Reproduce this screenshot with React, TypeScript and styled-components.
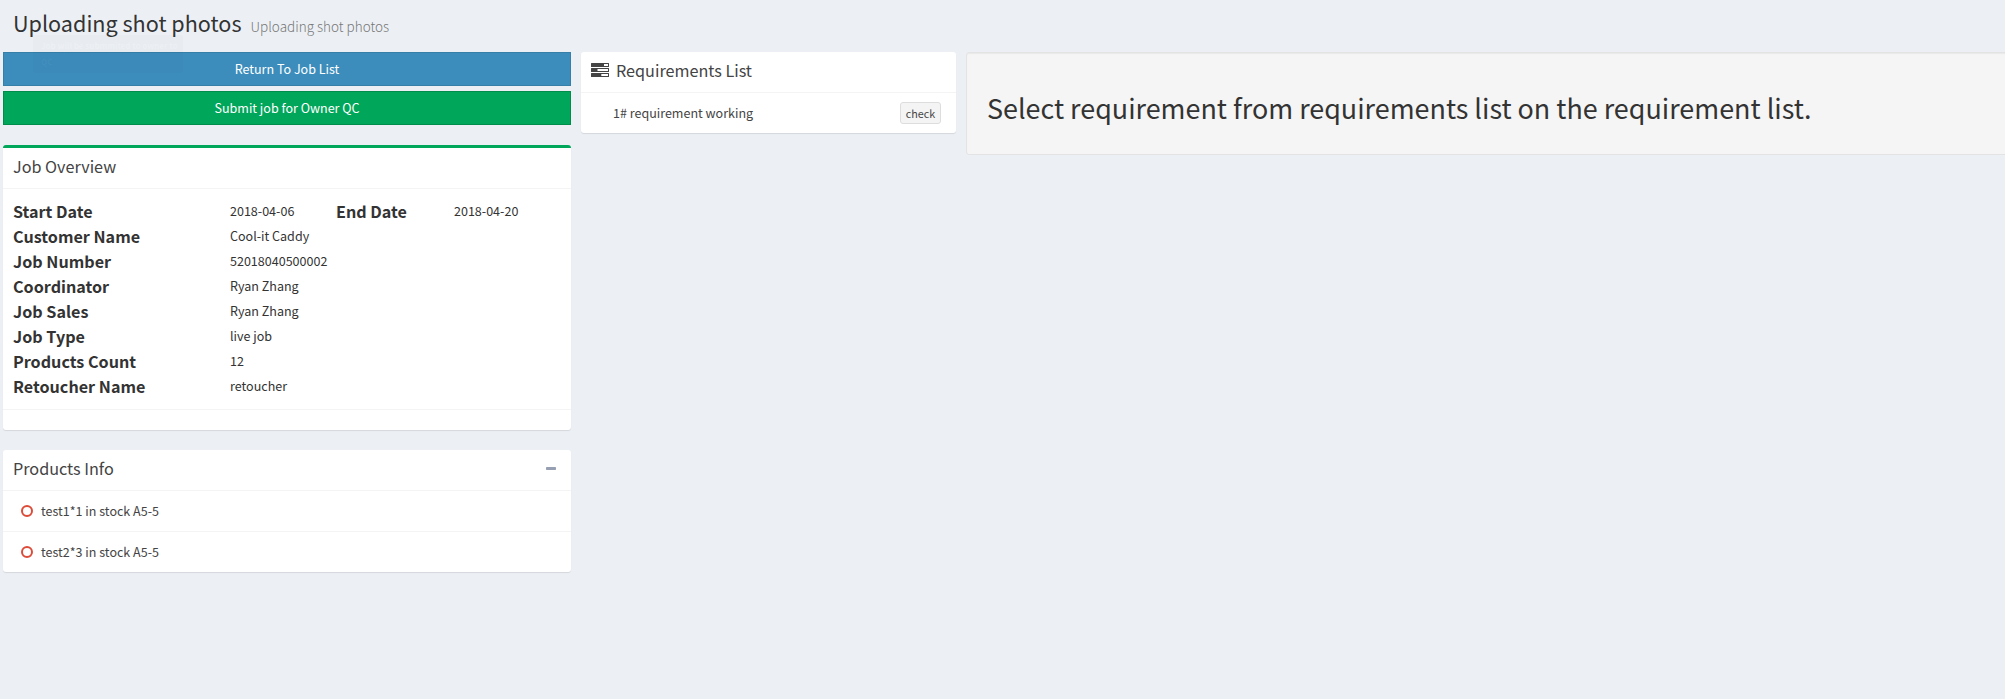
import React from 'react';
import styled, { createGlobalStyle } from 'styled-components';

const GlobalStyle = createGlobalStyle`
  *, *::before, *::after { box-sizing: border-box; }
  html, body { margin: 0; padding: 0; }
  body {
    min-height: 100vh;
    overflow: hidden;
    background: #ecf0f5;
    color: #333;
    font-family: "Noto Sans CJK SC", "Noto Sans", sans-serif;
    font-size: 12.54px;
    line-height: 20px;
  }
`;

const Page = styled.div`
  position: relative;
  width: 100%;
  height: 699px;
  overflow: hidden;
`;

const PageHeader = styled.header`
  display: flex;
  align-items: baseline;
  gap: 9px;
  height: 52px;
  padding: 11px 13px 0;
`;

const Title = styled.h1`
  margin: 0;
  font-size: 21.6px;
  font-weight: 400;
  line-height: 24px;
  white-space: nowrap;
`;

const Subtitle = styled.small`
  color: #777;
  font-size: 13.5px;
  font-weight: 300;
  line-height: 24px;
  white-space: nowrap;
`;

const Columns = styled.main`
  display: grid;
  grid-template-columns: 568px 375px 1060px;
  column-gap: 10px;
  align-items: start;
  padding-left: 3px;
`;

const SideColumn = styled.div`
  display: flex;
  flex-direction: column;
  gap: 20px;
`;

const Actions = styled.div`
  display: flex;
  flex-direction: column;
  gap: 5px;
`;

const ActionButton = styled.button<{ $tone: 'primary' | 'success' }>`
  height: 34px;
  padding: 0 12px 1px;
  border: 1px solid ${(p) => (p.$tone === 'primary' ? '#367fa9' : '#008d4c')};
  background: ${(p) => (p.$tone === 'primary' ? '#3c8dbc' : '#00a65a')};
  color: #fff;
  font: inherit;
  cursor: pointer;
`;

const Box = styled.section<{ $accent?: string }>`
  border-top: ${(p) => (p.$accent ? `3px solid ${p.$accent}` : '0')};
  border-radius: 3px;
  background: #fff;
  box-shadow: 0 1px 1px rgba(0, 0, 0, 0.1);
`;

const BoxHeader = styled.div`
  display: flex;
  align-items: center;
  height: 41px;
  padding: 0 15px 4px 10px;
  border-bottom: 1px solid #f4f4f4;
  color: #444;
`;

const BoxTitle = styled.h3`
  flex: 1;
  margin: 0;
  font-size: 16.2px;
  font-weight: 400;
  line-height: 18px;
`;

const TasksIcon = styled.svg`
  width: 18px;
  height: 18px;
  margin-right: 7px;
  fill: #444;
`;

const MinusIcon = styled.svg`
  width: 10px;
  height: 3px;
  fill: #97a0b3;
`;

const OverviewBody = styled.dl`
  display: grid;
  grid-template-columns: 217px 106px 118px 1fr;
  grid-auto-rows: 25px;
  margin: 0;
  padding: 10px;
`;

const Label = styled.dt`
  font-size: 16.15px;
  font-weight: 700;
  line-height: 25px;
  white-space: nowrap;
`;

const Value = styled.dd<{ $wide?: boolean }>`
  grid-column: ${(p) => (p.$wide ? 'span 3' : 'auto')};
  margin: 0;
  line-height: 23px;
  white-space: nowrap;
`;

const BoxFooter = styled.div`
  height: 21px;
  border-top: 1px solid #f4f4f4;
`;

const ItemList = styled.ul`
  margin: 0;
  padding: 0;
  list-style: none;
`;

const ProductItem = styled.li`
  display: flex;
  align-items: center;
  height: 41px;
  padding: 0 18px;
  color: #444;
  border-bottom: 1px solid #f4f4f4;

  &:last-child {
    height: 40px;
    border-bottom: 0;
  }
`;

const Ring = styled.span`
  width: 12px;
  height: 12px;
  margin-right: 8px;
  border: 2px solid #dd4b39;
  border-radius: 50%;
`;

const RequirementItem = styled.li`
  display: flex;
  align-items: center;
  justify-content: space-between;
  height: 40px;
  padding: 0 15px 0 32px;
  color: #444;
`;

const CheckButton = styled.button`
  width: 41px;
  height: 22px;
  padding: 0;
  border: 1px solid #ddd;
  border-radius: 3px;
  background: #f4f4f4;
  color: #444;
  font: inherit;
  font-size: 10.8px;
  line-height: 18px;
  cursor: pointer;
`;

const Well = styled.section`
  height: 103px;
  padding: 38px 20px 0;
  border: 1px solid #e3e3e3;
  border-radius: 3px;
  background: #f5f5f5;
  box-shadow: inset 0 1px 1px rgba(0, 0, 0, 0.05);
`;

const WellTitle = styled.h2`
  margin: 0;
  font-size: 26.92px;
  font-weight: 400;
  line-height: 33px;
  white-space: nowrap;
`;

const FadingToast = styled.div`
  position: absolute;
  top: 35px;
  left: 33px;
  width: 150px;
  height: 38px;
  padding: 3px 8px;
  border-radius: 2px;
  background: rgba(0, 0, 0, 0.015);
  color: rgba(255, 255, 255, 0.22);
  font-size: 8px;
  font-weight: 700;
  line-height: 16px;
  white-space: nowrap;
  pointer-events: none;
`;

const ToastTail = styled.span`
  display: block;
  color: rgba(255, 255, 255, 0.05);
`;

const details: [string, string][] = [
  ['Customer Name', 'Cool-it Caddy'],
  ['Job Number', '52018040500002'],
  ['Coordinator', 'Ryan Zhang'],
  ['Job Sales', 'Ryan Zhang'],
  ['Job Type', 'live job'],
  ['Products Count', '12'],
  ['Retoucher Name', 'retoucher'],
];

const products = ['test1*1 in stock A5-5', 'test2*3 in stock A5-5'];

export default function App() {
  return (
    <Page>
      <GlobalStyle />
      <PageHeader>
        <Title>Uploading shot photos</Title>
        <Subtitle>Uploading shot photos</Subtitle>
      </PageHeader>
      <Columns>
        <SideColumn>
          <Actions>
            <ActionButton $tone="primary">Return To Job List</ActionButton>
            <ActionButton $tone="success">Submit job for Owner QC</ActionButton>
          </Actions>
          <Box $accent="#00a65a">
            <BoxHeader>
              <BoxTitle>Job Overview</BoxTitle>
            </BoxHeader>
            <OverviewBody>
              <Label>Start Date</Label>
              <Value>2018-04-06</Value>
              <Label>End Date</Label>
              <Value>2018-04-20</Value>
              {details.map(([label, value]) => (
                <React.Fragment key={label}>
                  <Label>{label}</Label>
                  <Value $wide>{value}</Value>
                </React.Fragment>
              ))}
            </OverviewBody>
            <BoxFooter />
          </Box>
          <Box>
            <BoxHeader>
              <BoxTitle>Products Info</BoxTitle>
              <MinusIcon viewBox="0 0 10 3">
                <rect width="10" height="3" rx="0.7" />
              </MinusIcon>
            </BoxHeader>
            <ItemList>
              {products.map((product) => (
                <ProductItem key={product}>
                  <Ring />
                  {product}
                </ProductItem>
              ))}
            </ItemList>
          </Box>
        </SideColumn>
        <Box>
          <BoxHeader>
            <TasksIcon viewBox="0 0 18 18">
              <path
                fillRule="evenodd"
                d="M.5 2h17q.5 0 .5.5v3q0 .5-.5.5H.5Q0 6 0 5.500v-3Q0 2 .5 2zM13 3v2h4V3zM.5 7h17q.5 0 .5.5v3q0 .5-.5.5H.5Q0 11 0 10.500v-3Q0 7 .5 7zM6.500 8v2H17V8zM.5 12h17q.5 0 .5.5v3q0 .5-.5.5H.5Q0 16 0 15.500v-3Q0 12 .5 12zM10.300 13v2H17v-2z"
              />
            </TasksIcon>
            <BoxTitle>Requirements List</BoxTitle>
          </BoxHeader>
          <ItemList>
            <RequirementItem>
              1# requirement working
              <CheckButton>check</CheckButton>
            </RequirementItem>
          </ItemList>
        </Box>
        <Well>
          <WellTitle>Select requirement from requirements list on the requirement list.</WellTitle>
        </Well>
      </Columns>
      <FadingToast>
        Job will be submmited to owner to
        <ToastTail>QC</ToastTail>
      </FadingToast>
    </Page>
  );
}
